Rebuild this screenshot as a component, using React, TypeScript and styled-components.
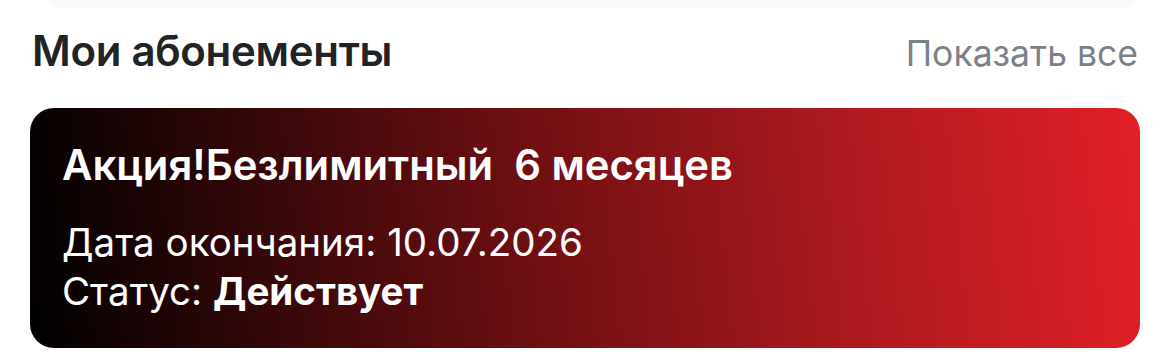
import React from "react";
import styled, { createGlobalStyle } from "styled-components";

const GlobalStyle = createGlobalStyle`
  html, body {
    margin: 0;
    padding: 0;
    background: #ffffff;
  }
  body {
    font-family: Inter, "Noto Sans", sans-serif;
    -webkit-font-smoothing: antialiased;
  }
`;

const Page = styled.div`
  width: 1170px;
  height: 357px;
  overflow: hidden;
  background: #fff;
`;

const PrevCard = styled.div`
  height: 8px;
  margin: 0 35px 0 48px;
  background: #fafafa;
  border-radius: 0 0 20px 20px;
`;

const SectionHeader = styled.div`
  display: flex;
  align-items: baseline;
  justify-content: space-between;
  padding: 17px 32px 0 32px;
  height: 80px;
  box-sizing: border-box;
`;

const SectionTitle = styled.h2`
  margin: 0;
  font-size: 42px;
  font-weight: 600;
  color: #222325;
  letter-spacing: -0.3px;
  line-height: 52px;
`;

const ShowAll = styled.a`
  font-size: 35.5px;
  font-weight: 400;
  color: #7b8188;
  line-height: 52px;
  text-decoration: none;
  cursor: pointer;
`;

const SubCard = styled.div`
  margin: 20px 30px 0 30px;
  height: 240px;
  box-sizing: border-box;
  padding: 32px 32px 0 32px;
  border-radius: 24px;
  background: linear-gradient(84deg, #000000 0%, #6e0f12 45%, #b01a20 75%, #e21f27 100%);
  color: #fff;
`;

const CardTitle = styled.div`
  font-size: 41.8px;
  font-weight: 600;
  line-height: 50px;
  white-space: pre;
  margin-bottom: 28px;
`;

const InfoLine = styled.div`
  font-size: 38.5px;
  font-weight: 400;
  line-height: 49px;
`;

const Strong = styled.span`
  font-weight: 700;
`;

export default function App() {
  return (
    <Page>
      <GlobalStyle />
      <PrevCard />
      <SectionHeader>
        <SectionTitle>Мои абонементы</SectionTitle>
        <ShowAll>Показать все</ShowAll>
      </SectionHeader>
      <SubCard>
        <CardTitle>{"Акция!Безлимитный  6 месяцев"}</CardTitle>
        <InfoLine>Дата окончания: 10.07.2026</InfoLine>
        <InfoLine>
          Статус: <Strong>Действует</Strong>
        </InfoLine>
      </SubCard>
    </Page>
  );
}
